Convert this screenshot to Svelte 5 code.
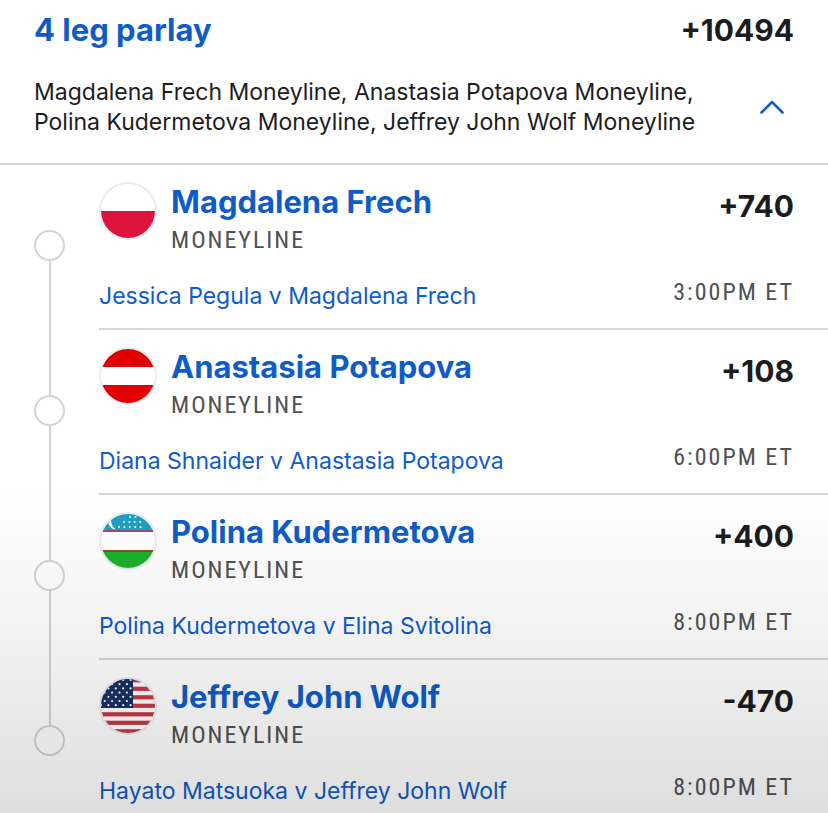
<script lang="ts">
  type Country = "pl" | "at" | "uz" | "us";

  interface Leg {
    player: string;
    country: Country;
    market: string;
    matchup: string;
    odds: string;
    time: string;
  }

  const legs: Leg[] = [
    {
      player: "Magdalena Frech",
      country: "pl",
      market: "Moneyline",
      matchup: "Jessica Pegula v Magdalena Frech",
      odds: "+740",
      time: "3:00PM ET",
    },
    {
      player: "Anastasia Potapova",
      country: "at",
      market: "Moneyline",
      matchup: "Diana Shnaider v Anastasia Potapova",
      odds: "+108",
      time: "6:00PM ET",
    },
    {
      player: "Polina Kudermetova",
      country: "uz",
      market: "Moneyline",
      matchup: "Polina Kudermetova v Elina Svitolina",
      odds: "+400",
      time: "8:00PM ET",
    },
    {
      player: "Jeffrey John Wolf",
      country: "us",
      market: "Moneyline",
      matchup: "Hayato Matsuoka v Jeffrey John Wolf",
      odds: "-470",
      time: "8:00PM ET",
    },
  ];

  const totalOdds = "+10494";
  const summary = legs.map((leg) => `${leg.player} ${leg.market}`).join(", ");

  // rows of small stars on the Uzbek flag: [y, first x, count]
  const uzStars = [
    [5, 31, 2],
    [10, 25, 4],
    [15, 20, 5],
  ];

  let expanded = $state(true);
</script>

{#snippet flag(country: Country)}
  <svg class="flag" viewBox="0 0 58 58" aria-hidden="true">
    <defs>
      <clipPath id="clip-{country}"><circle cx="29" cy="29" r="27" /></clipPath>
    </defs>
    <circle cx="29" cy="29" r="28" fill="#fff" stroke="#e9edf4" stroke-width="2" />
    <g clip-path="url(#clip-{country})">
      {#if country === "pl"}
        <rect y="29" width="58" height="29" fill="#dc143c" />
      {:else if country === "at"}
        <rect width="58" height="20" fill="#e00000" />
        <rect y="38" width="58" height="20" fill="#e00000" />
      {:else if country === "uz"}
        <rect width="58" height="19" fill="#1f9fc0" />
        <rect y="18" width="58" height="2" fill="#9b4a70" />
        <rect y="38" width="58" height="2" fill="#964a26" />
        <rect y="40" width="58" height="18" fill="#1eb12a" />
        <path d="M12 5c-4 5-2 11 4 12c-4-3-5-7-4-12z" fill="#fff" stroke="#fff" />
        {#each uzStars as [y, x, count]}
          {#each Array(count) as _, i}
            <circle cx={x + i * 5.4} cy={y} r="1.1" fill="#e3f5fa" />
          {/each}
        {/each}
      {:else}
        {#each Array(7) as _, i}
          <rect y={i * 8.5 + 1.2} width="58" height="4.2" fill="#c23a46" />
        {/each}
        <rect width="34" height="31" fill="#182f66" />
        {#each Array(7) as _, row}
          {#each Array(5) as _, col}
            <circle
              cx={2 + col * 7.4 + (row % 2) * 3.7}
              cy={3 + row * 4.2}
              r="1.1"
              fill="#fff"
            />
          {/each}
        {/each}
      {/if}
    </g>
  </svg>
{/snippet}

<main class="betslip">
  <header class="parlay">
    <div class="parlay-top">
      <h1>4 leg parlay</h1>
      <span class="odds">{totalOdds}</span>
    </div>
    <div class="parlay-summary">
      <p>{summary}</p>
      <button
        class="toggle"
        class:collapsed={!expanded}
        aria-label="Toggle legs"
        aria-expanded={expanded}
        onclick={() => (expanded = !expanded)}
      >
        <svg width="28" height="18" viewBox="0 0 28 18" fill="none">
          <path
            d="M3.500 14.500L14 4L24.500 14.500"
            stroke="#0f5cc8"
            stroke-width="2.500"
            stroke-linecap="round"
            stroke-linejoin="round"
          />
        </svg>
      </button>
    </div>
  </header>

  {#if expanded}
    <ol class="legs">
      {#each legs as leg}
        <li class="leg">
          <div class="rail">
            <span class="line lead"></span>
            <span class="node"></span>
            <span class="line"></span>
          </div>
          <div class="leg-body">
            <div class="leg-main">
              {@render flag(leg.country)}
              <div class="pick">
                <h2>{leg.player}</h2>
                <span class="market">{leg.market}</span>
              </div>
              <span class="odds">{leg.odds}</span>
            </div>
            <div class="leg-info">
              <a href="#matchup">{leg.matchup}</a>
              <time>{leg.time}</time>
            </div>
          </div>
        </li>
      {/each}
    </ol>
  {/if}
  <div class="fade"></div>
</main>

<style>
  :global(body) {
    margin: 0;
    background: #fff;
  }

  .betslip {
    position: relative;
    min-height: 100vh;
    font-family: Inter, Lato, sans-serif;
    color: #1c1c1e;
  }

  .parlay {
    padding: 12px 34px 26px;
    border-bottom: 2px solid #d6d7db;
  }

  .parlay-top,
  .parlay-summary,
  .leg-info {
    display: flex;
    justify-content: space-between;
  }

  h1,
  h2,
  p {
    margin: 0;
  }

  h1,
  h2 {
    font-size: 31px;
    line-height: 36px;
    font-weight: 700;
    color: #0f5cc8;
  }

  .odds {
    font-size: 30px;
    line-height: 36px;
    font-weight: 700;
  }

  .parlay-summary {
    align-items: center;
    gap: 24px;
    margin-top: 29px;
  }

  .parlay-summary p {
    font-size: 23px;
    line-height: 30px;
  }

  .toggle {
    display: flex;
    flex: none;
    margin-right: 8px;
    padding: 0;
    border: none;
    background: none;
    cursor: pointer;
  }

  .toggle.collapsed {
    transform: rotate(180deg);
  }

  .legs {
    margin: 0;
    padding: 0;
    list-style: none;
  }

  .leg {
    display: flex;
    padding-left: 34px;
  }

  .rail {
    display: flex;
    flex: none;
    flex-direction: column;
    align-items: center;
    width: 31px;
    margin-right: 34px;
  }

  .line {
    flex: 1;
    width: 2px;
    background: #d2d4da;
  }

  .line.lead {
    flex: none;
    height: 65px;
  }

  .leg:first-child .lead,
  .leg:last-child .line:last-child {
    background: none;
  }

  .node {
    box-sizing: border-box;
    width: 31px;
    height: 31px;
    border: 2px solid #d2d4da;
    border-radius: 50%;
  }

  .leg-body {
    flex: 1;
    padding: 17px 34px 17px 0;
    border-bottom: 2px solid #d6d7db;
  }

  .leg:last-child .leg-body {
    padding-bottom: 4px;
    border-bottom: none;
  }

  .leg-main {
    display: flex;
  }

  .flag {
    flex: none;
    width: 58px;
    height: 58px;
    margin-right: 14px;
  }

  .pick {
    flex: 1;
    padding-top: 2px;
  }

  .leg-main .odds {
    padding-top: 6px;
  }

  .market,
  time {
    font-family: "Roboto Condensed", "Noto Sans Condensed", "Open Sans Condensed", Lato, sans-serif;
    font-size: 24px;
    line-height: 32px;
    letter-spacing: 2px;
    text-transform: uppercase;
    color: #505153;
  }

  .market {
    display: block;
    margin-top: 4px;
  }

  .leg-info {
    margin-top: 20px;
  }

  .leg-info a {
    padding-top: 5px;
    font-size: 23px;
    line-height: 30px;
    color: #0f5cc8;
    text-decoration: none;
  }

  .fade {
    position: absolute;
    inset: 60% 0 0;
    background: linear-gradient(
      rgba(0, 0, 0, 0),
      rgba(0, 0, 0, 0.06) 50%,
      rgba(0, 0, 0, 0.13)
    );
    pointer-events: none;
  }
</style>
